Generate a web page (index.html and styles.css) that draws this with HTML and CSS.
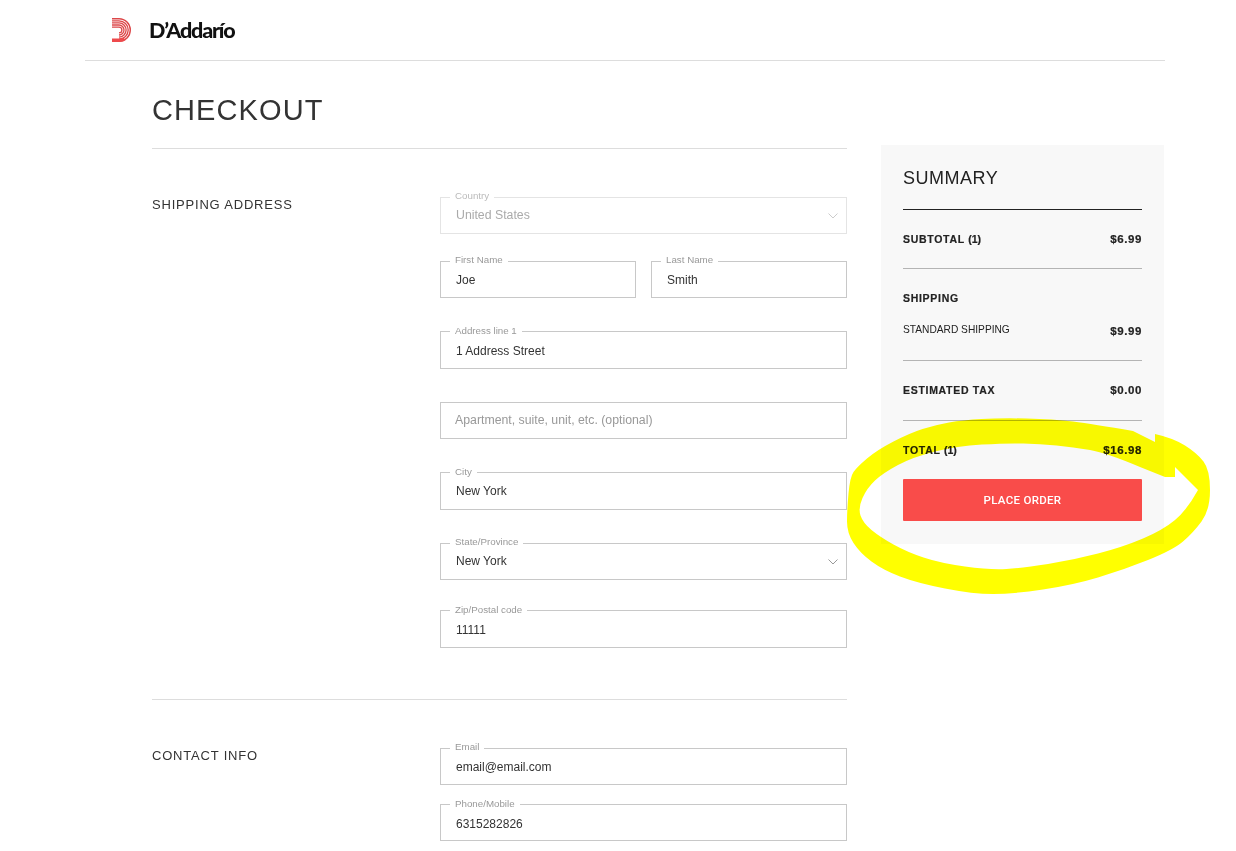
FILE: index.html
```html
<!DOCTYPE html>
<html lang="en">
<head>
<meta charset="utf-8">
<title>Checkout</title>
<link rel="stylesheet" href="styles.css">
</head>
<body>
<header class="site-header">
  <a class="logo">
    <svg class="logo-mark" width="19" height="24" viewBox="0 0 19 24" aria-hidden="true">
      <g fill="none" stroke="#dc4749">
        <path stroke-width="1.4" d="M0 .7H7A11.300 11.300 0 0 1 7 23.300H0"/>
        <path stroke-width="1.300" d="M0 2.800H7A9.200 9.200 0 0 1 7 21.200"/>
        <path stroke-width="1.300" d="M0 4.900H7A7.100 7.100 0 0 1 7 19.100"/>
        <path stroke-width="1.300" d="M0 7H7A5 5 0 0 1 7 17"/>
        <path stroke-width="1.300" d="M0 9.100H7A2.900 2.900 0 0 1 7 14.900"/>
        <path stroke-width="3.600" stroke="#ee4a4c" d="M0 22.200H7C9 22.200 11 21.800 12.500 20.800"/>
      </g>
    </svg>
    <span class="logo-text">D’Addarío</span>
  </a>
</header>
<div class="page">
  <main class="main">
    <h1 class="title">CHECKOUT</h1>
    <section class="section shipping">
      <h2 class="section-title">SHIPPING ADDRESS</h2>
      <div class="fields">
        <div class="field disabled h37 gap-27 nudge-up"><span class="legend">Country</span><span class="value">United States</span>
          <svg class="chev" width="10" height="6" viewBox="0 0 10 6"><path d="M.5.5 5 5 9.500.5" fill="none" stroke="currentColor"/></svg></div>
        <div class="row gap-33">
          <div class="field h37"><span class="legend">First Name</span><span class="value">Joe</span></div>
          <div class="field h37"><span class="legend">Last Name</span><span class="value">Smith</span></div>
        </div>
        <div class="field h38 gap-33 nudge-down"><span class="legend legend-low">Address line 1</span><span class="value">1 Address Street</span></div>
        <div class="field h37 gap-33 nudge-up"><span class="placeholder">Apartment, suite, unit, etc. (optional)</span></div>
        <div class="field h38 gap-33"><span class="legend legend-low">City</span><span class="value">New York</span></div>
        <div class="field h37 gap-30 nudge-up"><span class="legend">State/Province</span><span class="value">New York</span>
          <svg class="chev" width="10" height="6" viewBox="0 0 10 6"><path d="M.5.5 5 5 9.500.5" fill="none" stroke="currentColor"/></svg></div>
        <div class="field h38 nudge-down"><span class="legend legend-low">Zip/Postal code</span><span class="value">11111</span></div>
      </div>
    </section>
    <section class="section contact">
      <h2 class="section-title">CONTACT INFO</h2>
      <div class="fields">
        <div class="field h37 gap-19"><span class="legend">Email</span><span class="value">email@email.com</span></div>
        <div class="field h37 nudge-down"><span class="legend legend-low">Phone/Mobile</span><span class="value">6315282826</span></div>
      </div>
    </section>
  </main>
  <aside class="summary">
    <h2 class="summary-title">SUMMARY</h2>
    <div class="sum-block first"><div class="sum-row"><b>SUBTOTAL <span class="count">(1)</span></b><b class="price">$6.99</b></div></div>
    <div class="sum-block shipping-block">
      <div class="sum-row"><b>SHIPPING</b></div>
      <div class="sum-row method"><span>STANDARD SHIPPING</span><b class="price">$9.99</b></div>
    </div>
    <div class="sum-block tax"><div class="sum-row"><b>ESTIMATED TAX</b><b class="price">$0.00</b></div></div>
    <div class="sum-row total"><b>TOTAL <span class="count">(1)</span></b><b class="price">$16.98</b></div>
    <button class="place-order" type="button">PLACE ORDER</button>
  </aside>
</div>
<svg class="scribble" width="1236" height="851" viewBox="0 0 1236 851" aria-hidden="true">
  <path fill="#ffff00" fill-rule="evenodd" d="M1155 442L1133 431Q1093 424 1073 421.500Q1053 419 1026.500 418.500Q1000 418 981.500 419Q963 420 949 422.500Q935 425 922.500 429Q910 433 893.500 441.500Q877 450 867 458.500Q857 467 853.500 472Q850 477 848.500 493.500Q847 510 847 521.500Q847 533 853.500 543Q860 553 871.500 561.500Q883 570 900 576.500Q917 583 945 588.500Q973 594 993 594Q1013 594 1043 589.500Q1073 585 1098 577.500Q1123 570 1148 560Q1173 550 1183 541.500Q1193 533 1201.500 521.500Q1210 510 1210 490Q1210 470 1203.500 461.500Q1197 453 1185 445.500Q1173 438 1155 434Z M1175 467L1175 477L1165 477L1140 467Q1107 453 1090 450Q1073 447 1056.500 445.500Q1040 444 1023.500 443.500Q1007 443 982 444.500Q957 446 935 451.500Q913 457 898 465Q883 473 875 480.500Q867 488 862.500 498Q858 508 860.500 515.500Q863 523 871.500 530Q880 537 893.500 544.500Q907 552 923.500 557.500Q940 563 965 566.500Q990 570 1006.500 569Q1023 568 1048 564Q1073 560 1098 553.500Q1123 547 1143 538.500Q1163 530 1175 520Q1187 510 1198 490L1175 467Z"/>
</svg>
</body>
</html>
```
FILE: styles.css
```css
* { box-sizing: border-box; }
html, body { margin: 0; padding: 0; }
body {
  position: relative;
  height: 851px;
  overflow: hidden;
  background: #fff;
  color: #333;
  font-family: "Liberation Sans", Arial, sans-serif;
}
.site-header {
  margin-left: 85px;
  width: 1080px;
  height: 61px;
  border-bottom: 1px solid #ddd;
  padding: 18px 0 0 27px;
}
.logo { display: flex; align-items: center; height: 24px; }
.logo-mark { display: block; }
.logo-text {
  margin-left: 18px;
  font: 900 21.5px/24px Lato, sans-serif;
  letter-spacing: -1.2px;
  color: #111;
}
.page { display: flex; margin-left: 152px; }
.main { width: 695px; }
.title {
  margin: 0;
  height: 88px;
  padding-top: 30px;
  border-bottom: 1px solid #ddd;
  font-size: 29px;
  line-height: 38px;
  font-weight: 400;
  letter-spacing: 1.1px;
  color: #333;
}
.section { display: flex; }
.shipping { padding-top: 48px; height: 551px; border-bottom: 1px solid #ddd; }
.contact { padding-top: 48px; }
.section-title {
  width: 288px;
  margin: -1px 0 0;
  font-size: 13px;
  line-height: 18px;
  font-weight: 400;
  letter-spacing: .8px;
  color: #333;
}
.fields { width: 407px; }
.field {
  position: relative;
  display: flex;
  align-items: center;
  border: 1px solid #c8c8c8;
  padding-left: 15px;
  font-size: 12px;
  color: #333;
}
.h37 { height: 37px; }
.h38 { height: 38px; }
.gap-19 { margin-bottom: 19px; }
.gap-27 { margin-bottom: 27px; }
.gap-30 { margin-bottom: 30px; }
.gap-33 { margin-bottom: 33px; }
.nudge-up { padding-bottom: 2px; }
.nudge-down { padding-top: 2px; }
.row { display: grid; grid-template-columns: 196px 196px; gap: 15px; }
.legend {
  position: absolute;
  left: 9px;
  top: -8px;
  padding: 0 5px;
  background: #fff;
  font-size: 9.75px;
  line-height: 12px;
  color: #999;
}
.legend-low { top: -7px; }
.placeholder { margin-left: -1px; font-size: 12.3px; color: #999; }
.field.disabled { border-color: #e4e4e4; color: #aaa; font-size: 12.3px; }
.field.disabled .legend { color: #bbb; }
.chev { position: absolute; right: 8px; top: 15px; color: #999; }
.disabled .chev { color: #ccc; }
.summary {
  width: 283px;
  height: 399px;
  margin: 84px 0 0 34px;
  padding: 22px 22px 0;
  background: #f8f8f8;
  color: #222;
  font-size: 10.5px;
}
.summary-title {
  margin: 0;
  height: 43px;
  border-bottom: 1px solid #222;
  font-size: 18px;
  line-height: 22px;
  font-weight: 400;
  letter-spacing: .5px;
}
.sum-block { border-bottom: 1px solid #b4b4b4; }
.sum-row { display: flex; justify-content: space-between; align-items: flex-start; line-height: 14px; letter-spacing: .7px; }
.sum-row b { font-weight: 700; -webkit-text-stroke: .2px currentColor; }
.sum-row .price { font-size: 11.5px; letter-spacing: .6px; }
.count { letter-spacing: 0; }
.first { height: 59px; padding-top: 22px; }
.shipping-block { height: 92px; padding-top: 22px; }
.method { margin-top: 18px; letter-spacing: 0; font-size: 10.2px; }
.sum-row.method .price { padding-top: 1px; }
.tax { height: 60px; padding-top: 22px; }
.total { margin-top: 22px; }
.place-order {
  display: block;
  width: 239px;
  height: 42px;
  margin-top: 22px;
  border: 0;
  border-radius: 1px;
  background: #f94c4a;
  color: #fff;
  font: 500 11.5px Roboto, sans-serif;
  letter-spacing: .3px;
}
.scribble { position: absolute; left: 0; top: 0; mix-blend-mode: multiply; pointer-events: none; }
```
